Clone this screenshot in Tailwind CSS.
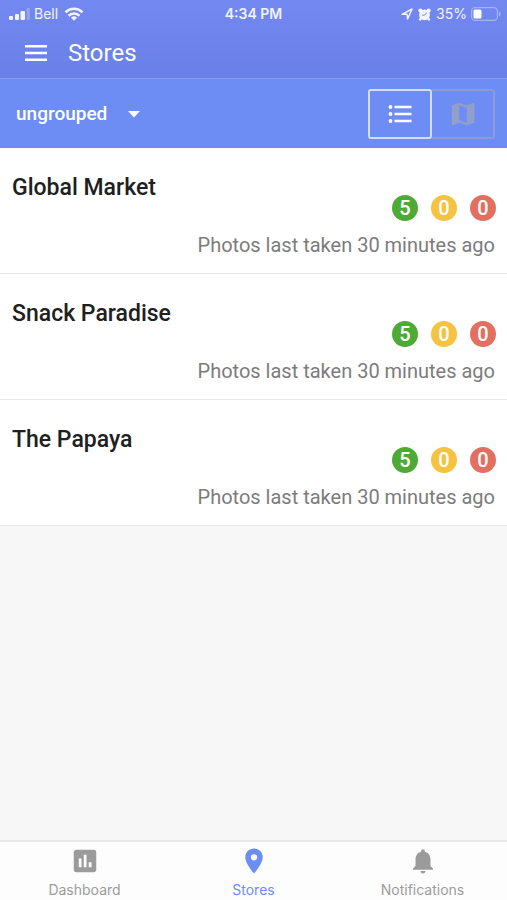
<!DOCTYPE html>
<html lang="en">
<head>
<meta charset="utf-8">
<meta name="viewport" content="width=device-width, initial-scale=1">
<title>Stores</title>
<script src="https://cdn.jsdelivr.net/npm/@tailwindcss/browser@4"></script>
</head>
<body class="flex min-h-screen flex-col bg-[#f7f7f7] font-[Roboto,sans-serif] text-[#202020]">
<header class="border-b border-[#89a0f6] bg-linear-to-b from-[#7389f1] to-[#6980e8] text-white">
  <div class="grid h-7 grid-cols-3 items-center px-2 font-[Inter,sans-serif] text-sm leading-none text-white/90">
    <div class="flex items-center gap-1">
      <svg class="h-3 w-[22px]" viewBox="0 0 22 12" fill="currentColor" aria-label="Signal"><rect x="1" y="8" width="4" height="4" rx="1"/><rect x="7" y="6" width="4" height="6" rx="1"/><rect x="12.500" y="3" width="4.500" height="9" rx="1"/><rect x="18.500" y="0" width="3.500" height="12" rx="1" opacity=".25"/></svg>
      <span>Bell</span>
      <svg class="ml-0.5 h-[14px] w-[20px]" viewBox="0 0 20 14" fill="none" stroke="currentColor" stroke-width="2.6" aria-label="Wi-Fi"><path d="M1.500 5.200a12.200 12.200 0 0 1 17 0M4.600 8.700a7.700 7.700 0 0 1 10.800 0"/><path d="M10 13.800l-3-3a4.300 4.300 0 0 1 6 0z" fill="currentColor" stroke="none"/></svg>
    </div>
    <span class="text-center font-semibold">4:34 PM</span>
    <div class="flex items-center justify-end gap-1">
      <svg class="mr-px size-3" viewBox="0 0 12 12" fill="none" stroke="currentColor" stroke-width="1.5" stroke-linejoin="round" aria-label="Location"><path d="M1 6.300 11 1 6.600 11 6 6.300z"/></svg>
      <svg class="mr-px size-[13px]" viewBox="0 0 13 13" aria-label="Alarm"><g fill="currentColor"><circle cx="6.500" cy="6.800" r="5.400"/><circle cx="2.400" cy="2.600" r="2.100"/><circle cx="10.600" cy="2.600" r="2.100"/><path d="m2.200 9.300 1.900 1.700-1.900 2L.6 11.700zM10.800 9.300l1.600 2.400-1.600 1.300-1.900-2z"/></g><path d="M8.700 4.600 6.500 7.200H4.200" fill="none" stroke="#7088f0"/></svg>
      <span>35%</span>
      <svg class="-mr-0.5 h-[14px] w-[30px]" viewBox="0 0 30 14" fill="none" aria-label="Battery"><rect x=".6" y=".6" width="25.800" height="12.800" rx="3.600" stroke="#fff" stroke-opacity=".35" stroke-width="1.200"/><rect x="2.500" y="2.500" width="8" height="9" rx="1.500" fill="#fff"/><path d="M28 4.500v5c2-.8 2-4.200 0-5z" fill="#fff" fill-opacity=".4"/></svg>
    </div>
  </div>
  <div class="flex h-[50px] items-center gap-5 px-6">
    <button type="button" aria-label="Menu"><svg class="block h-4 w-6" viewBox="0 0 24 16" fill="currentColor"><path d="M1 0h22v2.500H1zM1 6.700h22v2.500H1zM1 13.400h22v2.500H1z"/></svg></button>
    <h1 class="text-2xl leading-7">Stores</h1>
  </div>
</header>
<div class="flex h-[69px] items-center justify-between bg-[#6d8df4] px-3 text-white">
  <div class="relative">
    <select aria-label="Group" class="appearance-none bg-transparent py-2 pr-8 pl-1 text-[19px] leading-6 font-medium text-white"><option>ungrouped</option></select>
    <svg class="pointer-events-none absolute top-[17px] right-0 h-[7px] w-3" viewBox="0 0 12 7" fill="currentColor"><path d="M0 0h12L6 6.500z"/></svg>
  </div>
  <div class="flex">
    <button type="button" aria-label="List view" aria-pressed="true" class="flex h-[50px] w-16 items-center justify-center rounded-[3px] border-2 border-[#d3ddff]">
      <svg class="h-5 w-6" viewBox="0 0 24 20" fill="currentColor"><circle cx="2.500" cy="3" r="1.900"/><circle cx="2.500" cy="10" r="1.900"/><circle cx="2.500" cy="17" r="1.900"/><path d="M6.500 1.700h17v2.600h-17zM6.500 8.700h17v2.600h-17zM6.500 15.700h17v2.600h-17z"/></svg>
    </button>
    <button type="button" aria-label="Map view" aria-pressed="false" class="flex h-[50px] w-[63px] items-center justify-center rounded-r-[3px] border-2 border-l-0 border-[#8c9cd2] text-[#929fc9]">
      <svg class="size-[30px]" viewBox="0 0 24 24" fill="currentColor"><path d="m20.500 3-.16.030L15 5.100 9 3 3.360 4.900c-.21.070-.36.250-.36.480V20.500c0 .28.220.5.500.5l.16-.030L9 18.900l6 2.100 5.640-1.900c.21-.070.360-.25.360-.48V3.500c0-.28-.22-.5-.5-.5zM15 19l-6-2.110V5l6 2.110V19z"/></svg>
    </button>
  </div>
</div>
<main class="flex-1">
  <ul>
    <li class="border-b border-[#e8e8e8] bg-white px-3 pt-7 pb-4">
      <h2 class="h-[19px] text-[23px] leading-6 font-medium">Global Market</h2>
      <div class="-mr-px flex justify-end gap-[13px] pb-3 text-xl leading-[26px] font-medium text-white">
        <span class="size-[26px] rounded-full bg-[#4dab35] text-center">5</span><span class="size-[26px] rounded-full bg-[#f5c242] text-center">0</span><span class="size-[26px] rounded-full bg-[#e26f60] text-center">0</span>
      </div>
      <p class="text-right text-xl leading-6 text-[#7c7c7c]">Photos last taken 30 minutes ago</p>
    </li>
    <li class="border-b border-[#e8e8e8] bg-white px-3 pt-7 pb-4">
      <h2 class="h-[19px] text-[23px] leading-6 font-medium">Snack Paradise</h2>
      <div class="-mr-px flex justify-end gap-[13px] pb-3 text-xl leading-[26px] font-medium text-white">
        <span class="size-[26px] rounded-full bg-[#4dab35] text-center">5</span><span class="size-[26px] rounded-full bg-[#f5c242] text-center">0</span><span class="size-[26px] rounded-full bg-[#e26f60] text-center">0</span>
      </div>
      <p class="text-right text-xl leading-6 text-[#7c7c7c]">Photos last taken 30 minutes ago</p>
    </li>
    <li class="border-b border-[#e8e8e8] bg-white px-3 pt-7 pb-4">
      <h2 class="h-[19px] text-[23px] leading-6 font-medium">The Papaya</h2>
      <div class="-mr-px flex justify-end gap-[13px] pb-3 text-xl leading-[26px] font-medium text-white">
        <span class="size-[26px] rounded-full bg-[#4dab35] text-center">5</span><span class="size-[26px] rounded-full bg-[#f5c242] text-center">0</span><span class="size-[26px] rounded-full bg-[#e26f60] text-center">0</span>
      </div>
      <p class="text-right text-xl leading-6 text-[#7c7c7c]">Photos last taken 30 minutes ago</p>
    </li>
  </ul>
</main>
<nav class="sticky bottom-0 grid grid-cols-3 border-t-2 border-[#e9e9e9] bg-[#fdfdfd] pt-1 font-[Inter,sans-serif] text-sm leading-5 text-[#9b9b9b]">
  <a href="#dashboard" class="flex flex-col items-center gap-1">
    <svg class="size-[30px]" viewBox="0 0 24 24" fill="currentColor"><path d="M19 3H5c-1.100 0-2 .9-2 2v14c0 1.100.9 2 2 2h14c1.100 0 2-.9 2-2V5c0-1.100-.9-2-2-2zM9.200 17H7v-7h2.200v7zm4 0H11V7h2.200v10zm4 0H15v-4h2.200v4z"/></svg>Dashboard</a>
  <a href="#stores" aria-current="page" class="flex flex-col items-center gap-1 text-[#6d8df4]">
    <svg class="size-[30px]" viewBox="0 0 24 24" fill="currentColor"><path d="M12 2C8.130 2 5 5.130 5 9c0 5.250 7 13 7 13s7-7.750 7-13c0-3.870-3.130-7-7-7zm0 9.500a2.500 2.500 0 0 1 0-5 2.500 2.500 0 0 1 0 5z"/></svg>Stores</a>
  <a href="#notifications" class="flex flex-col items-center gap-1">
    <svg class="size-[30px]" viewBox="0 0 24 24" fill="currentColor"><path d="M12 22c1.100 0 2-.9 2-2h-4c0 1.100.890 2 2 2zm6-6v-5c0-3.070-1.640-5.640-4.500-6.320V4c0-.830-.670-1.500-1.500-1.500s-1.500.670-1.500 1.500v.680C7.630 5.360 6 7.920 6 11v5l-2 2v1h16v-1l-2-2z"/></svg>Notifications</a>
</nav>
</body>
</html>
